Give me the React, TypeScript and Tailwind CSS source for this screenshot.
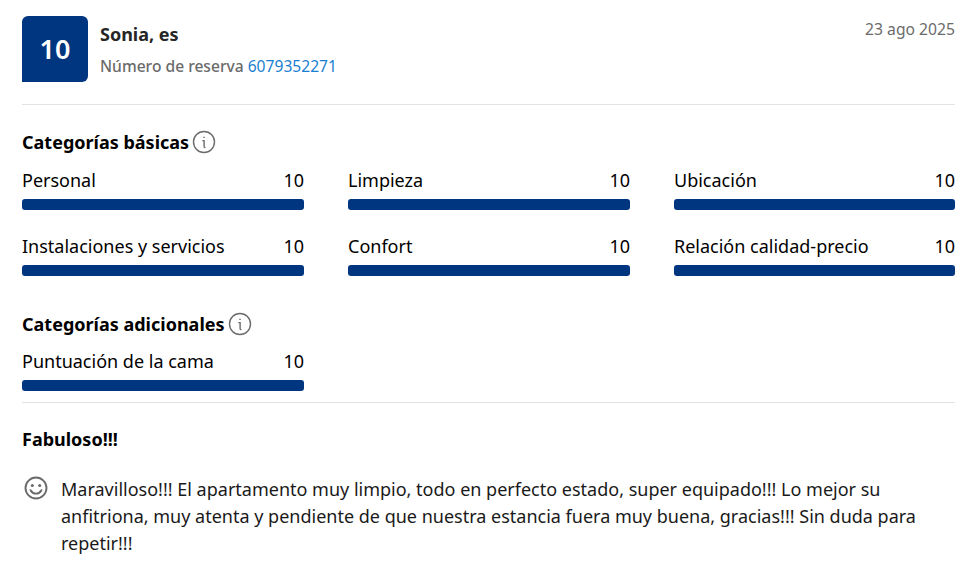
function InfoIcon() {
  return (
    <svg width="24" height="24" viewBox="0 0 24 24" fill="none" stroke="#6b6b6b" className="shrink-0">
      <circle cx="12" cy="12" r="10.5" strokeWidth="1.4" />
      <path d="M12 6.8v1.2" strokeWidth="1.5" />
      <path d="M10.4 10.6h1.7v5.8c0 .8.5 1.2 1.4 1.2" strokeWidth="1.4" />
    </svg>
  );
}

function SmileIcon() {
  return (
    <svg width="24" height="24" viewBox="0 0 24 24" fill="none" stroke="#6b6b6b" className="ml-[2px] shrink-0">
      <circle cx="12" cy="12" r="10.5" strokeWidth="1.9" />
      <circle cx="8.3" cy="9.5" r="1.5" fill="#6b6b6b" stroke="none" />
      <circle cx="15.7" cy="9.5" r="1.5" fill="#6b6b6b" stroke="none" />
      <path d="M6.6 14.2c1.2 2.3 3.1 3.4 5.4 3.4s4.2-1.1 5.4-3.4" strokeWidth="1.9" strokeLinecap="round" />
    </svg>
  );
}

function Score({ label }: { label: string }) {
  return (
    <div>
      <div className="flex justify-between h-[24px] leading-[24px] text-[18px] text-black">
        <span>{label}</span>
        <span>10</span>
      </div>
      <div className="mt-[7px] h-[11px] rounded-[3px] bg-[#003580]" />
    </div>
  );
}

function SectionTitle({ text }: { text: string }) {
  return (
    <div className="flex items-center gap-[3px] h-[24px]">
      <h3 className="text-[18px] font-bold text-black">{text}</h3>
      <InfoIcon />
    </div>
  );
}

export default function App() {
  return (
    <main className="w-[965px] h-[577px] overflow-hidden bg-white pl-[22px] pr-[10px] pt-[16px] font-['Noto_Sans',sans-serif]">
      <header className="flex justify-between border-b border-[#e2e2e2] pb-[22px]">
        <div className="flex">
          <div className="flex h-[66px] w-[66px] items-center justify-center rounded-[6px] rounded-bl-none bg-[#003580] text-[27px] font-semibold text-white">
            10
          </div>
          <div className="ml-[12px]">
            <p className="mt-[5px] h-[26px] leading-[26px] text-[18px] font-bold text-[#262626]">Sonia, es</p>
            <p className="mt-[7px] leading-[24px] text-[15.6px] font-medium text-[#6b6b6b]">
              Número de reserva <a className="font-normal text-[#1a7fd1]">6079352271</a>
            </p>
          </div>
        </div>
        <span className="mt-[1px] h-[24px] leading-[24px] text-[15.7px] text-[#6b6b6b]">23 ago 2025</span>
      </header>

      <section className="mt-[25px]">
        <SectionTitle text="Categorías básicas" />
        <div className="mt-[14px] grid grid-cols-[282px_282px_281px] gap-x-[44px] gap-y-[24px]">
          <Score label="Personal" />
          <Score label="Limpieza" />
          <Score label="Ubicación" />
          <Score label="Instalaciones y servicios" />
          <Score label="Confort" />
          <Score label="Relación calidad-precio" />
        </div>
      </section>

      <section className="mt-[36px] border-b border-[#e2e2e2] pb-[11px]">
        <SectionTitle text="Categorías adicionales" />
        <div className="mt-[13px] grid grid-cols-[282px_282px_281px] gap-x-[44px]">
          <Score label="Puntuación de la cama" />
        </div>
      </section>

      <h4 className="mt-[24px] h-[24px] leading-[24px] text-[18px] font-bold text-black">Fabuloso!!!</h4>

      <div className="mt-[25px] flex">
        <SmileIcon />
        <p className="ml-[13px] text-[18px] leading-[27px] text-[#1a1a1a]">
          Maravilloso!!! El apartamento muy limpio, todo en perfecto estado, super equipado!!! Lo mejor su anfitriona, muy atenta y pendiente de que nuestra estancia fuera muy buena, gracias!!! Sin duda para repetir!!!
        </p>
      </div>
    </main>
  );
}
